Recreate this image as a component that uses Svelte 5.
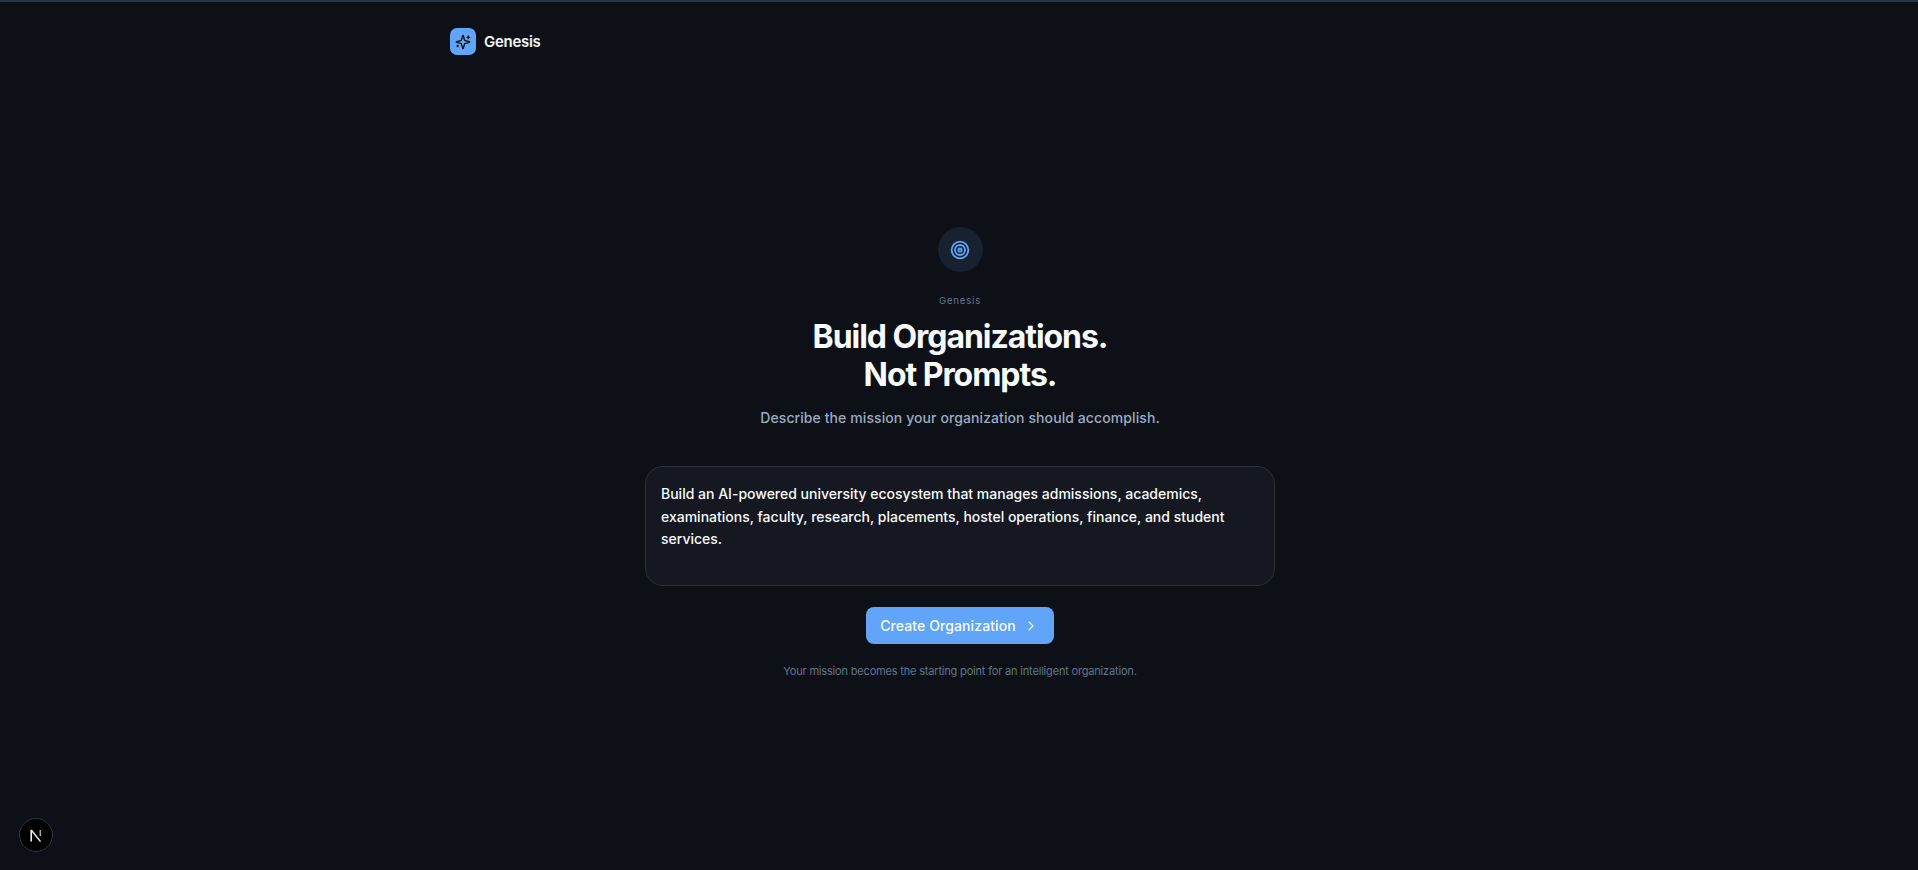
<script>
    let mission = $state('Build an AI-powered university ecosystem that manages admissions, academics, examinations, faculty, research, placements, hostel operations, finance, and student services.');
</script>

<div class="page">
    <header class="top-bar">
        <div class="brand">
            <span class="brand-icon">
                <svg viewBox="0 0 24 24" width="16" height="16" fill="none" stroke="#0d1117" stroke-width="2" stroke-linecap="round" stroke-linejoin="round">
                    <path d="M9.937 15.500A2 2 0 0 0 8.500 14.063l-6.135-1.582a.5.5 0 0 1 0-.962L8.500 9.936A2 2 0 0 0 9.937 8.500l1.582-6.135a.5.5 0 0 1 .963 0L14.063 8.500A2 2 0 0 0 15.500 9.937l6.135 1.581a.5.5 0 0 1 0 .964L15.500 14.063a2 2 0 0 0-1.437 1.437l-1.582 6.135a.5.5 0 0 1-.963 0z"/>
                    <path d="M20 3v4M22 5h-4M4 17v2M5 18H3"/>
                </svg>
            </span>
            <span class="brand-name">Genesis</span>
        </div>
    </header>

    <main class="hero">
        <div class="target-circle">
            <svg viewBox="0 0 24 24" width="20" height="20" fill="none" stroke="#60a5fa" stroke-width="2.200">
                <circle cx="12" cy="12" r="10"/>
                <circle cx="12" cy="12" r="6"/>
                <circle cx="12" cy="12" r="2"/>
            </svg>
        </div>
        <p class="eyebrow">Genesis</p>
        <h1 class="title">Build Organizations.<br />Not Prompts.</h1>
        <p class="subtitle">Describe the mission your organization should accomplish.</p>
        <textarea class="mission-input" bind:value={mission} spellcheck="false"></textarea>
        <button class="create-button">
            Create Organization
            <svg viewBox="0 0 24 24" width="16" height="16" fill="none" stroke="currentColor" stroke-width="1.600" stroke-linecap="round" stroke-linejoin="round">
                <path d="M9 18l6-6-6-6"/>
            </svg>
        </button>
        <p class="hint">Your mission becomes the starting point for an intelligent organization.</p>
    </main>

    <button class="dev-badge" aria-label="Next.js dev tools">
        <svg viewBox="0 0 12 13" width="12" height="13" fill="none" stroke="#fff" stroke-width="1.500">
            <path d="M1.200 12.500V1"/>
            <path d="M1.200 1L10.500 12.500" stroke="#e4e4e4"/>
            <path d="M10.300 1V7" stroke="#aaa"/>
        </svg>
    </button>
</div>

<style>
    :global(body) {
        margin: 0;
        background: #0d1117;
    }

    .page {
        height: 870px;
        overflow: hidden;
        background: #0d1117;
        border-top: 2px solid #2a3240;
        box-sizing: border-box;
        font-family: Inter, "Noto Sans", sans-serif;
        color: #f1f5f9;
    }

    .top-bar {
        width: 1018px;
        margin: 0 auto;
        padding-top: 26px;
    }
    .brand {
        display: flex;
        align-items: center;
        gap: 7px;
    }
    .brand-icon {
        width: 26px;
        height: 27px;
        border-radius: 7px;
        background: #60a5fa;
        display: flex;
        align-items: center;
        justify-content: center;
    }
    .brand-name {
        font-size: 15px;
        font-weight: 600;
        letter-spacing: -0.300px;
        margin-left: 1px;
    }

    .hero {
        display: flex;
        flex-direction: column;
        align-items: center;
        padding-left: 2px;
        margin-top: 172px;
    }
    .target-circle {
        width: 45px;
        height: 45px;
        border-radius: 50%;
        background: #172130;
        display: flex;
        align-items: center;
        justify-content: center;
    }
    .eyebrow {
        margin: 22px 0 0;
        font-size: 9.500px;
        line-height: 14px;
        letter-spacing: 0.850px;
        color: #64748b;
    }
    .title {
        margin: 10px 0 0;
        font-size: 32px;
        line-height: 37.500px;
        font-weight: 700;
        letter-spacing: -1.050px;
        text-align: center;
        color: #f8fafc;
    }
    .subtitle {
        margin: 14px 0 0;
        font-size: 14px;
        line-height: 22px;
        font-weight: 500;
        letter-spacing: 0.090px;
        color: #9cabc2;
    }
    .mission-input {
        width: 630px;
        height: 120px;
        box-sizing: border-box;
        margin-top: 37px;
        padding: 16px 15px;
        border: 1px solid #2a2f3a;
        border-radius: 18px;
        background: #151821;
        color: #f8fafc;
        font-family: inherit;
        font-size: 14px;
        font-weight: 500;
        line-height: 22.500px;
        resize: none;
        outline: none;
    }
    .create-button {
        display: flex;
        align-items: center;
        gap: 7px;
        margin-top: 21px;
        height: 37px;
        padding: 0 15px 0 14px;
        border: none;
        border-radius: 8px;
        background: #60a5fa;
        color: #f8fafc;
        font-family: inherit;
        font-size: 14px;
        font-weight: 500;
        letter-spacing: 0.100px;
    }
    .hint {
        margin: 19px 0 0;
        font-size: 11px;
        line-height: 16px;
        letter-spacing: -0.180px;
        color: #64748b;
    }

    .dev-badge {
        position: fixed;
        left: 19px;
        bottom: 18px;
        width: 34px;
        height: 34px;
        padding: 0;
        border: 1px solid #33363d;
        border-radius: 50%;
        background: #000;
        display: flex;
        align-items: center;
        justify-content: center;
    }
</style>
